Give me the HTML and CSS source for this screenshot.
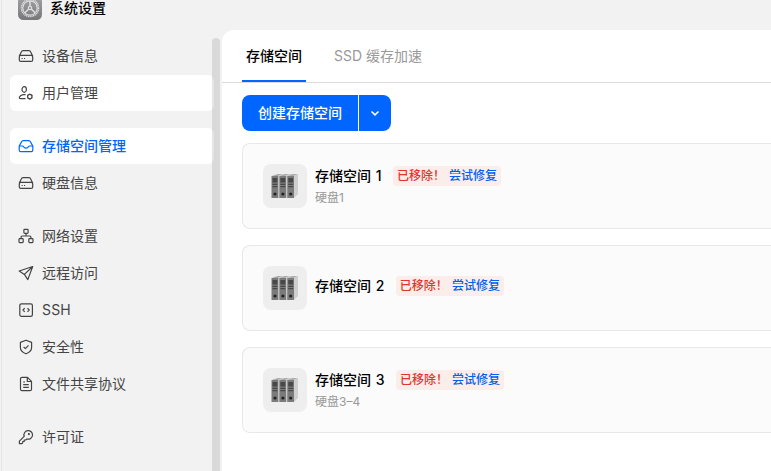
FILE: index.html
```html
<!DOCTYPE html>
<html lang="zh-CN">
<head>
	<meta charset="UTF-8" />
	<title>系统设置</title>
	<link rel="stylesheet" href="styles.css">
</head>
<body>
	<!-- 公用图标 -->
	<svg class="hide">
		<symbol id="i-disk" viewBox="0 0 16 16"><path d="M1.200 8.300 3.300 4Q3.800 2.700 5 2.700h6q1.200 0 1.700 1.300l2.100 4.300M2.800 7.400h10.400q1.500 0 1.500 1.500v3q0 1.500-1.500 1.500H2.800q-1.500 0-1.500-1.500v-3q0-1.500 1.500-1.500z" /><path d="M3.600 10.500h1.100M6 10.500h1.100" /></symbol>
		<symbol id="i-server" viewBox="0 0 28 26">
			<path d="M1 3 7 1h20v20l-4 4H1z" fill="#cfcfcf" />
			<path d="M1 3 7 1h4L6.500 3zM9 3l5-2h4l-4.500 2zM17 3l5-2h4l-4 2z" fill="#aaa" />
			<path d="M.5 3h6.700v22H.5zM8.400 3h6.700v22H8.400zM16.300 3H23v22h-6.700z" fill="#7b7b7b" />
			<path d="M1.500 5h4.800v4.500H1.500zM9.400 5h4.800v4.500H9.400zM17.300 5h4.800v4.500h-4.800zM1.500 10.700h4.800v1.200H1.500zM9.400 10.700h4.800v1.200H9.400zM17.300 10.700h4.800v1.200h-4.800zM1.500 13.100h4.800v1.200H1.500zM9.400 13.100h4.800v1.200H9.400zM17.300 13.100h4.800v1.200h-4.800z" fill="#484848" />
			<g fill="#222"><circle cx="4" cy="21" r="1.600" /><circle cx="11.900" cy="21" r="1.600" /><circle cx="19.700" cy="21" r="1.600" /></g>
		</symbol>
	</svg>

	<div class="window">
		<!-- 头部 -->
		<div class="header">
			<svg class="logo" viewBox="0 0 24 24">
				<defs><linearGradient id="metal" x2="0" y2="1"><stop stop-color="#a4a4a6" /><stop offset="1" stop-color="#77777a" /></linearGradient></defs>
				<rect width="24" height="24" rx="5.500" fill="url(#metal)" />
				<g fill="none" stroke="#dedede">
					<circle cx="12" cy="12" r="8.600" stroke-width="1.400" stroke-dasharray="1.200 .6" />
					<circle cx="12" cy="12" r="7.200" stroke-width="1.200" />
					<path d="M12 5v6M10.800 13l-4 3.800M13.200 13l4 3.800" stroke-width="1.500" />
					<circle cx="12" cy="12" r="1.700" stroke-width="1.200" />
				</g>
			</svg>
			<span class="title">系统设置</span>
		</div>
		<!-- END of 头部 -->
		<div class="container">
			<!-- 侧边栏 -->
			<div class="sidebar">
				<ul class="group">
					<li class="item"><svg class="icon"><use href="#i-disk" /></svg>设备信息</li>
					<li class="item hover"><svg class="icon" viewBox="0 0 16 16"><ellipse cx="6.200" cy="4.500" rx="2.200" ry="2.800" /><path d="M7.600 9.600H5.200Q2.300 10 1.500 12q-.6 1.700 1 1.700h5" /><circle cx="11.800" cy="11.600" r="2.200" /><path d="M11.800 8.700v.7M11.800 13.800v.7M9.200 10.200l.7.400M13.700 12.700l.7.400M9.200 13.100l.7-.4M13.700 10.600l.7-.4" /></svg>用户管理</li>
				</ul>
				<ul class="group">
					<li class="item active"><svg class="icon" viewBox="0 0 16 16"><path d="M1.200 8 3.400 4.100Q4 2.700 5.300 2.700h5.400q1.300 0 1.900 1.400L14.800 8v4q0 1.600-1.600 1.600H2.800Q1.200 13.600 1.200 12zM1.200 8h3.200q.8 0 1.200.8.600 1.300 2.400 1.300t2.400-1.300Q10.800 8 11.600 8h3.200" /></svg>存储空间管理</li>
					<li class="item"><svg class="icon"><use href="#i-disk" /></svg>硬盘信息</li>
				</ul>
				<ul class="group">
					<li class="item"><svg class="icon" viewBox="0 0 16 16"><rect x="5.900" y="1.300" width="4.200" height="4" rx=".8" /><rect x="1" y="10.600" width="4.200" height="4" rx=".8" /><rect x="10.800" y="10.600" width="4.200" height="4" rx=".8" /><path d="M8 5.300V8M3.100 10.600V9q0-1 1-1h7.800q1 0 1 1v1.600" /></svg>网络设置</li>
					<li class="item"><svg class="icon" viewBox="0 0 16 16"><path d="M14.700 1.500 1.200 6l5.200 3.400 3.400 5.200zM14.700 1.500 6.400 9.400" /></svg>远程访问</li>
					<li class="item"><svg class="icon" viewBox="0 0 16 16"><rect x="1.800" y="1.800" width="12.600" height="12.600" rx="1.600" /><path d="M6.700 6.200 5 8l1.700 1.800M9.500 6.200 11.200 8 9.500 9.800" /></svg><span class="latin">SSH</span></li>
					<li class="item"><svg class="icon" viewBox="0 0 16 16"><path d="M8 1.200 13.600 3.400v5q0 4-5.600 6.400Q2.400 12.400 2.400 8.400v-5z" /><path d="M5.600 7.900 7.400 9.600l3.100-3.200" /></svg>安全性</li>
					<li class="item"><svg class="icon" viewBox="0 0 16 16"><path d="M9.500 1.300H4q-1.500 0-1.500 1.500v10.400q0 1.500 1.500 1.500h8q1.500 0 1.500-1.500V5.300zM9.300 1.500v4h4M5.200 6h1.800M5.200 8.700h5.600M5.200 11.400h5.600" /></svg>文件共享协议</li>
				</ul>
				<ul class="group">
					<li class="item"><svg class="icon" viewBox="0 0 16 16"><path d="M6.200 7.400A4.300 4.300 0 1 1 9 10l-1.300 1H6.200v1.500H4.700v1.400q-.2.700-.9.700H1.400v-2.400z" /><circle cx="10.900" cy="5.100" r=".5" /></svg>许可证</li>
				</ul>
				<div class="scrollbar"></div>
			</div>
			<!-- END of 侧边栏 -->

			<!-- 内容区 -->
			<div class="main">
				<div class="tabs">
					<div class="tab current">存储空间</div>
					<div class="tab">SSD 缓存加速</div>
				</div>
				<div class="content">
					<div class="btn-group">
						<button type="button" class="btn">创建存储空间</button>
						<button type="button" class="btn btn-more"><svg width="10" height="7" viewBox="0 0 10 7"><path d="M1.500 1.500 5 4.900 8.500 1.500" /></svg></button>
					</div>
					<div class="card">
						<div class="thumb"><svg width="28" height="26"><use href="#i-server" /></svg></div>
						<div class="info">
							<div class="name">存储空间 1<span class="tag"><span>已移除！</span><a>尝试修复</a></span></div>
							<div class="desc">硬盘1</div>
						</div>
					</div>
					<div class="card">
						<div class="thumb"><svg width="28" height="26"><use href="#i-server" /></svg></div>
						<div class="info">
							<div class="name">存储空间 2<span class="tag"><span>已移除！</span><a>尝试修复</a></span></div>
						</div>
					</div>
					<div class="card">
						<div class="thumb"><svg width="28" height="26"><use href="#i-server" /></svg></div>
						<div class="info">
							<div class="name">存储空间 3<span class="tag"><span>已移除！</span><a>尝试修复</a></span></div>
							<div class="desc">硬盘3–4</div>
						</div>
					</div>
				</div>
			</div>
			<!-- END of 内容区 -->
		</div>
	</div>
</body>
</html>
```
FILE: styles.css
```css
* {
	box-sizing: border-box;
}

html,
body,
ul,
li {
	margin: 0;
	padding: 0;
}

body {
	height: 100vh;
	overflow: hidden;
	background-color: #f2f2f2;
	font-family: Inter, "Noto Sans CJK SC", sans-serif;
	font-size: 14px;
	line-height: 20px;
	color: #000;
}

.hide {
	display: none;
}

.window {
	display: flex;
	flex-direction: column;
	height: 100vh;
	margin-left: 1px;
	border-left: 1px solid #e6e6e6;
}

.header {
	flex: none;
	display: flex;
	align-items: center;
	height: 44px;
	margin-top: -14px;
	padding-left: 16px;
}

.logo {
	width: 24px;
	height: 24px;
	margin-right: 8px;
}

.title {
	font-weight: 500;
}

.container {
	flex: 1;
	display: flex;
	min-height: 0;
}

/*侧边栏*/
.sidebar {
	position: relative;
	flex: none;
	width: 220px;
	padding: 8px 8px 0;
	overflow: hidden;
}

.group {
	list-style: none;
	margin-bottom: 17px;
}

.item {
	display: flex;
	align-items: center;
	height: 36px;
	margin-bottom: 1px;
	padding-left: 8px;
	width: 204px;
	border-radius: 6px;
	color: #444;
}

.group .item:last-child {
	margin-bottom: 0;
}

.item.hover,
.item.active {
	background-color: #fff;
}

.item.active {
	font-weight: 500;
	color: #0066ff;
}

.latin {
	letter-spacing: .2px;
}

.icon {
	width: 16px;
	height: 16px;
	margin-right: 8px;
	fill: none;
	stroke: currentColor;
	stroke-width: 1.2;
	stroke-linejoin: round;
}

.scrollbar {
	position: absolute;
	top: 8px;
	right: 2px;
	width: 8px;
	height: 600px;
	border-radius: 4px;
	background-color: rgba(0, 0, 0, .1);
}

/*内容区*/
.main {
	flex: 1;
	background-color: #fff;
	border-top-left-radius: 12px;
}

.tabs {
	display: flex;
	height: 53px;
	padding: 0 20px;
	border-bottom: 1px solid #dcdcdc;
}

.tab {
	height: 52px;
	margin-right: 24px;
	padding: 0 4px;
	line-height: 52px;
	color: #999;
}

.tab.current {
	border-bottom: 2px solid #0066ff;
	font-weight: 500;
	color: #000;
}

.content {
	padding: 12px 0 0 20px;
}

.btn-group {
	display: flex;
	gap: 1px;
	margin-bottom: 12px;
}

.btn {
	height: 36px;
	padding: 0 16px;
	border: 0;
	border-radius: 8px 0 0 8px;
	background-color: #0066ff;
	font: inherit;
	font-weight: 500;
	color: #fff;
}

.btn-more {
	display: flex;
	align-items: center;
	justify-content: center;
	width: 32px;
	padding: 0;
	border-radius: 0 8px 8px 0;
}

.btn-more svg {
	fill: none;
	stroke: #fff;
	stroke-width: 1.6;
}

.card {
	display: flex;
	align-items: center;
	height: 86px;
	margin-bottom: 16px;
	padding-left: 20px;
	border: 1px solid #e8e8e8;
	border-right: 0;
	border-radius: 8px 0 0 8px;
	background-color: #fbfbfb;
}

.thumb {
	display: flex;
	align-items: center;
	justify-content: center;
	width: 44px;
	height: 44px;
	margin-right: 8px;
	border-radius: 8px;
	background-color: #eee;
}

.name {
	display: flex;
	align-items: center;
	height: 22px;
	font-weight: 500;
	word-spacing: 1px;
}

.name:last-child {
	margin-bottom: 4px;
}

.tag {
	display: flex;
	gap: 4px;
	margin-left: 11.5px;
	padding: 0 4px;
	border-radius: 4px;
	background-color: #faedea;
	font-size: 12px;
	color: #e0352f;
}

.tag a {
	color: #0060f0;
}

.desc {
	margin-top: 1px;
	font-size: 12px;
	color: #999;
}
```
